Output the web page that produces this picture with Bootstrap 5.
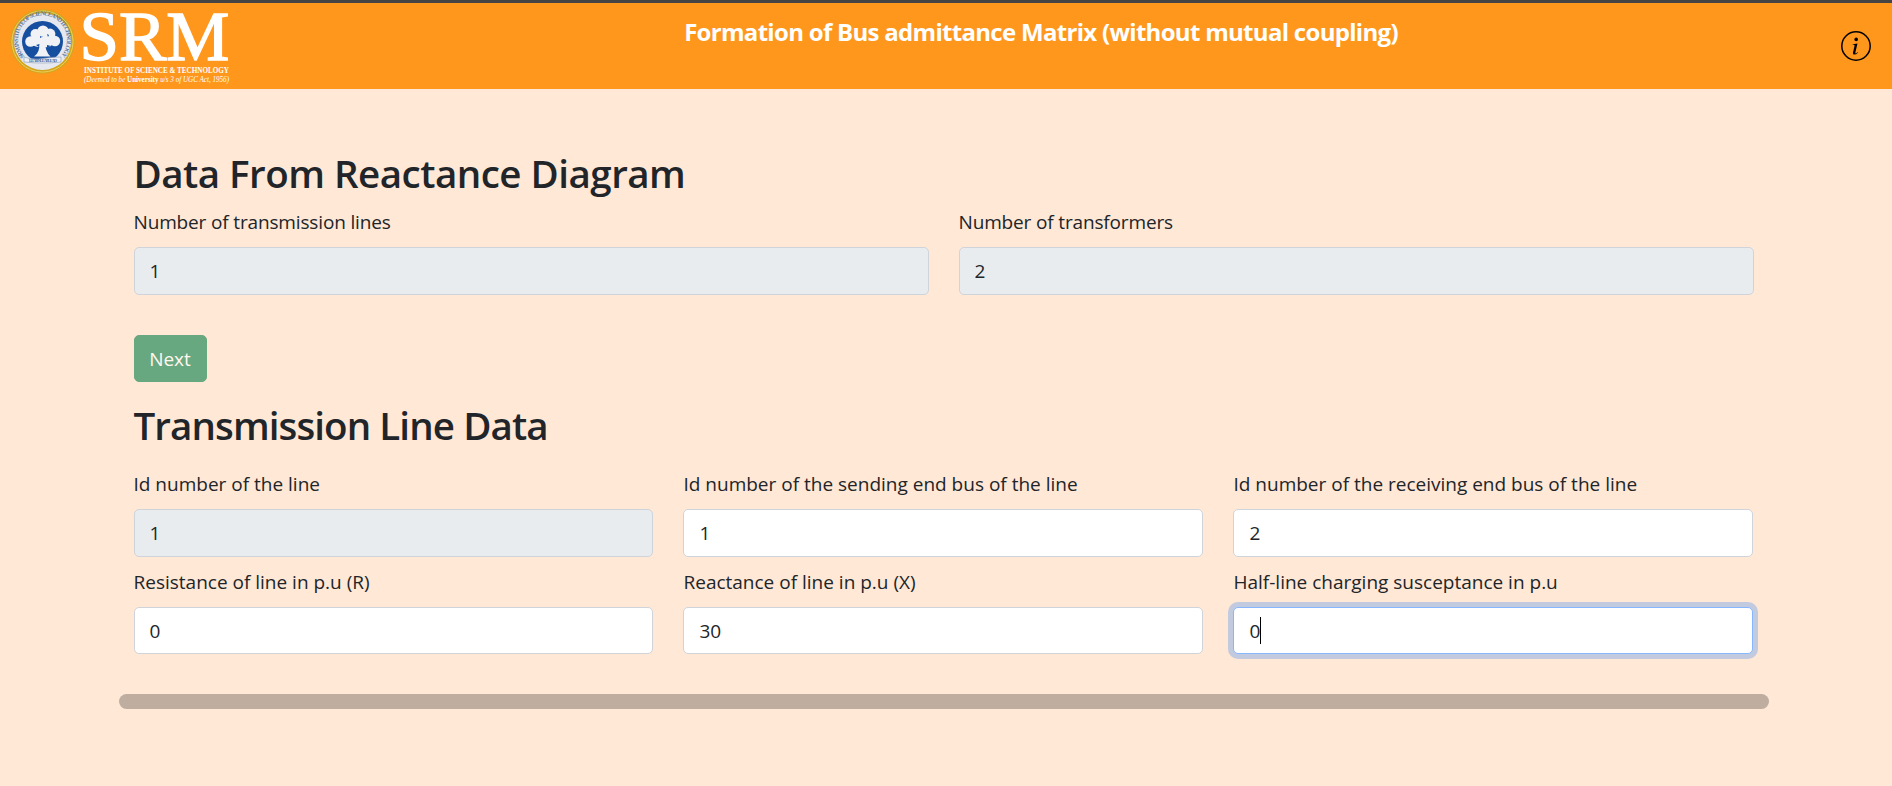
<!DOCTYPE html>
<html lang="en">
<head>
<meta charset="utf-8">
<meta name="viewport" content="width=device-width, initial-scale=1">
<title>Bus admittance Matrix</title>
<link href="https://cdn.jsdelivr.net/npm/bootstrap@5.3.0/dist/css/bootstrap.min.css" rel="stylesheet">
<style>
html{font-size:20px}
body{background:#ffe8d6;color:#212529;font-family:"Open Sans","Noto Sans",sans-serif;overflow:hidden}
.top-bar{height:89px;border-top:3px solid #444;background:#ff971d}
.brand-logo{width:240px;height:86px}
.page-title{font-size:24px;font-weight:700;line-height:30px;letter-spacing:-.7px;padding-top:14px}
.info-link{width:50px;padding:28px 21px 0 0;margin-left:-1px;margin-right:1px}
.page-main{padding:60px 5px 0 0}
.page-main .container{max-width:1650px}
h2{font-size:38.5px;font-weight:600;line-height:48px;margin-bottom:10px;height:48px}
.head-a{letter-spacing:-.5px}
.head-b{letter-spacing:-.9px}
.form-label{font-size:19px;line-height:30px;margin-bottom:10px;display:block;white-space:nowrap}
.label-wide{letter-spacing:-.15px}
.form-control{height:47.500px;font-size:19px;border-color:#ced4da;border-radius:5px;padding:7px 15px 6px;color:#212529;background:#fff}
.form-control:disabled{background:#e9ecef}
.form-control.is-active{border-color:#86b7fe;box-shadow:0 0 0 5px rgba(13,110,253,.25)}
.text-caret{left:27px;top:10px;width:1px;height:27px;background:#000}
.btn-next{height:47px;width:73px;font-size:19px;border-radius:5px;padding:2px 0 0;margin:40px 0 19.500px;display:block}
.thick-rule{height:15px;background:#000;opacity:.25;border-radius:7.500px;margin:40px -15px 0;border:0}
</style>
</head>
<body>
<header class="top-bar d-flex">
<svg class="brand-logo flex-shrink-0" viewBox="0 3 240 86">
<defs><path id="ring" d="M24.600 56.500A24.500 24.500 0 1 1 60.400 56.500"/></defs>
<circle cx="42.500" cy="41.500" r="32.300" fill="#d5a51d"/>
<circle cx="42.500" cy="41.500" r="30.600" fill="none" stroke="#e8d15d" stroke-width="1"/>
<circle cx="42.500" cy="41.500" r="28.500" fill="#e5e8ee"/>
<circle cx="42.500" cy="41.500" r="20.500" fill="#164f9f"/>
<text font-family="Liberation Serif,serif" font-size="6.100" font-weight="700" fill="#60789e"><textPath href="#ring" textLength="112">SRM INSTITUTE OF SCIENCE AND TECHNOLOGY</textPath></text>
<g fill="#f0f2f6"><circle cx="43" cy="31" r="5.600"/><circle cx="35.500" cy="34" r="5"/><circle cx="50" cy="34" r="5.400"/><circle cx="30.500" cy="41.500" r="5.300"/><circle cx="55" cy="41" r="5.200"/><circle cx="38" cy="41" r="6"/><circle cx="47" cy="41" r="6.300"/><path d="M39.500 43h6q-.7 8 5 13.500H34q6-4 5.500-13.500z"/></g>
<path fill="#164f9f" d="M36 45l3 2 .5-3zM47 45l4 1-4 2zM40 36l2 1-2 1zM47 34l2 1-1 2z"/>
<path d="M24 57q8 3 18.500 1.500T61 57v5q-9 1-18.500 1T24 62z" fill="#edf0f5" stroke="#8999b4" stroke-width=".6"/>
<text x="29" y="62" font-family="Liberation Serif,serif" font-size="4.500" font-weight="700" fill="#506c99" textLength="28">LEARN LEAP LEAD</text>
<g fill="#fff" font-family="Liberation Serif,serif">
<text x="79.500" y="60" font-size="70" stroke="#fff" stroke-width="1.400" textLength="150" lengthAdjust="spacingAndGlyphs">SRM</text>
<text x="84" y="72.500" font-size="9" font-weight="700" textLength="145" lengthAdjust="spacingAndGlyphs">INSTITUTE OF SCIENCE &amp; TECHNOLOGY</text>
<text x="84" y="81.500" font-size="7.200" font-style="italic" textLength="145" lengthAdjust="spacingAndGlyphs">(Deemed to be <tspan font-weight="700" font-style="normal">University</tspan> u/s 3 of UGC Act, 1956)</text>
</g>
</svg>
<h1 class="page-title text-white text-center text-nowrap flex-grow-1 mb-0">Formation of Bus admittance Matrix (without mutual coupling)</h1>
<div class="info-link flex-shrink-0">
<svg width="30" height="30" viewBox="0 0 30 30" class="d-block"><circle cx="15" cy="15" r="14.200" fill="none" stroke="#000" stroke-width="1.500"/><circle cx="15.200" cy="8.400" r="1.800"/><path d="M11.800 13.200l4.700-.8-2.100 8.900q-.3 1.300.5 1.100.7-.2 1.800-1.400l.3.400q-1.700 2.200-3.600 2.200-1.900 0-1.400-2.200l1.500-6.400q.3-1.200-.6-1.200h-1.200z"/></svg>
</div>
</header>
<main class="page-main">
<div class="container">
<h2 class="head-a">Data From Reactance Diagram</h2>
<div class="row">
<div class="col-6"><label class="form-label label-wide" for="lines">Number of transmission lines</label><input id="lines" class="form-control" value="1" disabled></div>
<div class="col-6"><label class="form-label label-wide" for="trafos">Number of transformers</label><input id="trafos" class="form-control" value="2" disabled></div>
</div>
<button class="btn btn-success btn-next" disabled>Next</button>
<h2 class="head-b mb-0">Transmission Line Data</h2>
<div class="row pt-3">
<div class="col-4"><label class="form-label" for="id1">Id number of the line</label><input id="id1" class="form-control" value="1" disabled></div>
<div class="col-4"><label class="form-label" for="send">Id number of the sending end bus of the line</label><input id="send" class="form-control" value="1"></div>
<div class="col-4"><label class="form-label" for="recv">Id number of the receiving end bus of the line</label><input id="recv" class="form-control" value="2"></div>
</div>
<div class="row pt-2">
<div class="col-4"><label class="form-label" for="res">Resistance of line in p.u (R)</label><input id="res" class="form-control" value="0"></div>
<div class="col-4"><label class="form-label" for="rea">Reactance of line in p.u (X)</label><input id="rea" class="form-control" value="30"></div>
<div class="col-4"><label class="form-label" for="sus">Half-line charging susceptance in p.u</label><div class="position-relative"><input id="sus" class="form-control is-active" value="0"><span class="text-caret position-absolute"></span></div></div>
</div>
<hr class="thick-rule">
</div>
</main>
<script src="https://cdn.jsdelivr.net/npm/bootstrap@5.3.0/dist/js/bootstrap.bundle.min.js"></script>
</body>
</html>
